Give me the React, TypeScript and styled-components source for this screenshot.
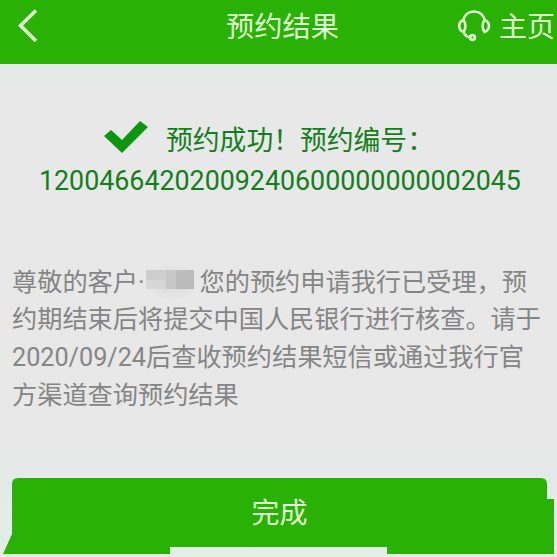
import React from "react";
import styled, { createGlobalStyle } from "styled-components";

const GlobalStyle = createGlobalStyle`
  * { box-sizing: border-box; }
  html, body { margin: 0; padding: 0; background: #e8e8e8; overflow: hidden; }
`;

const Screen = styled.div`
  width: 557px;
  height: 557px;
  display: flex;
  flex-direction: column;
  overflow: hidden;
  background: linear-gradient(#e2ebe8 64px, #e8e8e8 100px, #e8e8e8 440px, #e5e9e9 475px, #e2eee6 557px);
  font-family: Roboto, "Noto Sans CJK SC", sans-serif;
  white-space: nowrap;
`;

const Header = styled.header`
  flex: none;
  height: 64px;
  display: grid;
  grid-template-columns: 1fr auto 1fr;
  align-items: center;
  padding: 0 2px 13px 18px;
  background: #29b106;
  color: #e0fbd3;
`;

const BackIcon = styled.svg`
  display: block;
  width: 20px;
  height: 34px;
`;

const Title = styled.h1`
  margin: 5px 8px 0 0;
  font-size: 28.2px;
  line-height: 40px;
  font-weight: 400;
`;

const HomeLink = styled.div`
  justify-self: end;
  display: flex;
  align-items: center;
  gap: 8px;
  font-size: 28px;
  line-height: 40px;
`;

const HomeLabel = styled.span`
  padding-top: 4px;
`;

const HeadsetIcon = styled.svg`
  display: block;
  width: 34px;
  height: 34px;
`;

const Result = styled.section`
  flex: none;
  height: 190px;
  padding-top: 57px;
  color: #117f1b;
  font-size: 26.8px;
  line-height: 40px;
`;

const ResultHeading = styled.div`
  display: flex;
  align-items: center;
  gap: 17px;
  padding-left: 104px;
`;

const CheckIcon = styled.svg`
  display: block;
  width: 45px;
  height: 34px;
  margin-top: -8px;
`;

const ReferenceNumber = styled.div`
  padding-left: 39px;
`;

const Message = styled.div`
  flex: none;
  height: 224px;
  padding: 9.6px 0 0 12px;
  color: #858585;
  font-size: 25.2px;
  line-height: 37.8px;
`;

const Line = styled.div`
  display: flex;
  align-items: center;
  height: 37.8px;
`;

const MaskedName = styled.span`
  width: 56px;
  height: 36px;
  margin-right: -1px;
  display: flex;
  align-items: center;
  justify-content: center;
  background: radial-gradient(ellipse, #dedede 30%, #e8e8e800 72%);
`;

const Mosaic = styled.span`
  display: grid;
  grid-template-columns: 20px 10px 18px;
  grid-template-rows: 10px 9px;
  margin: -5px 5px 0 0;
  filter: blur(0.7px);
`;

const Tile = styled.span<{ $tone: string }>`
  background: ${(p) => p.$tone};
`;

const DoneButton = styled.button`
  flex: none;
  width: 551px;
  height: 76px;
  margin-left: 3px;
  padding: 0 0 10px 2px;
  border: 0;
  background: #29b106;
  color: #e0fbd3;
  font: inherit;
  font-size: 28px;
  clip-path: path("M15 0 H538 Q544 0 544 6 V21 H551 V76 H384 V69 H167 V76 H0 L9 56 V6 Q9 0 15 0 Z");
`;

const tones = ["#cecece", "#c8c8c8", "#bcbcbc", "#d6d6d6", "#c6c6c6", "#bababa"];

export default function App() {
  return (
    <>
      <GlobalStyle />
      <Screen>
        <Header>
          <BackIcon viewBox="0 0 20 34" fill="none" stroke="currentColor" strokeWidth="3.6">
            <path d="M18 1.500 L2.5 16.500 L18 32" />
          </BackIcon>
          <Title>预约结果</Title>
          <HomeLink>
            <HeadsetIcon viewBox="0 0 34 34" fill="none" stroke="currentColor" strokeWidth="2.6">
              <path d="M6 12 C7.500 5.500 11 2.500 17 2.500 S26.500 5.500 28 12" />
              <path d="M6.500 11 C4 12 2.200 14.500 2.200 17 S4 22 6.500 23 C9 20 9 14 6.500 11 Z" />
              <path d="M27.500 11 C30 12 32 14.500 32 17 S30 22 27.500 23 C25 20 25 14 27.500 11 Z" />
              <path d="M6.500 23 C8 26.500 9.500 28 13 28.500" />
              <circle cx="15.500" cy="28.500" r="2.4" />
            </HeadsetIcon>
            <HomeLabel>主页</HomeLabel>
          </HomeLink>
        </Header>
        <Result>
          <ResultHeading>
            <CheckIcon viewBox="0 0 45 34" fill="#0b960f">
              <path d="M0 16 L7 10 L18 20 L36 1 L44 7 L18 33 Z" />
            </CheckIcon>
            <span>预约成功！预约编号：</span>
          </ResultHeading>
          <ReferenceNumber>12004664202009240600000000002045</ReferenceNumber>
        </Result>
        <Message>
          <Line>
            <span>尊敬的客户·</span>
            <MaskedName>
              <Mosaic>
                {tones.map((tone, i) => (
                  <Tile key={i} $tone={tone} />
                ))}
              </Mosaic>
            </MaskedName>
            <span>您的预约申请我行已受理，预</span>
          </Line>
          <Line>约期结束后将提交中国人民银行进行核查。请于</Line>
          <Line>2020/09/24后查收预约结果短信或通过我行官</Line>
          <Line>方渠道查询预约结果</Line>
        </Message>
        <DoneButton>完成</DoneButton>
      </Screen>
    </>
  );
}
